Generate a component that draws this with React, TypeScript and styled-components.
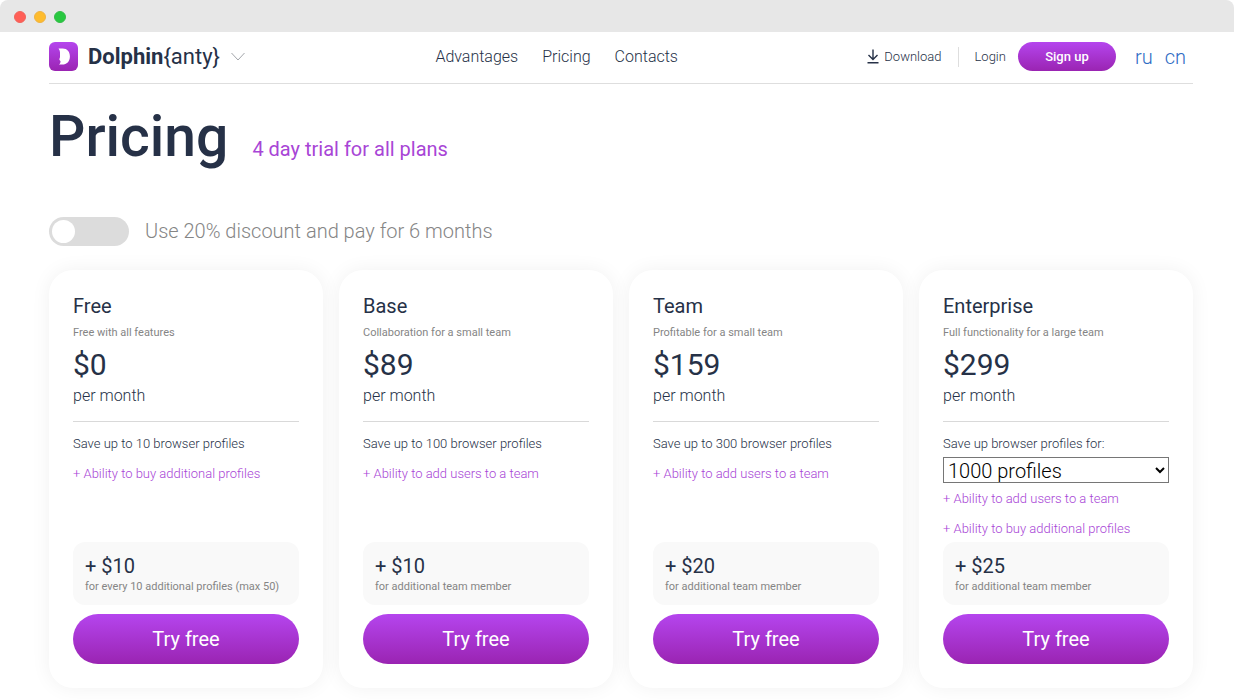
import React, { useState } from "react";
import styled, { createGlobalStyle } from "styled-components";

const ink = "#263147";
const purple = "#a845d6";
const gray = "#858585";
const gradient = "linear-gradient(180deg, #b545ee 0%, #9a24b2 100%)";

const GlobalStyle = createGlobalStyle`
  *, *::before, *::after { box-sizing: border-box; }
  body {
    margin: 0;
    background: #fff;
    color: ${ink};
    font-family: Roboto, "Liberation Sans", sans-serif;
    font-weight: 300;
  }
  h1, h2, p { margin: 0; }
  a { color: inherit; text-decoration: none; }
  button, select { font-family: inherit; }
`;

const BrowserWindow = styled.div`
  min-height: 100vh;
  overflow: hidden;
  border-radius: 8px;
  background: #fff;
`;

const TitleBar = styled.div`
  display: flex;
  align-items: center;
  gap: 8px;
  height: 32px;
  padding: 2px 14px 0;
  background: #e7e7e7;
`;

const Dot = styled.span<{ $color: string; $edge: string }>`
  width: 12px;
  height: 12px;
  border: 1px solid ${(p) => p.$edge};
  border-radius: 50%;
  background: ${(p) => p.$color};
`;

const Page = styled.div`
  padding: 0 41px 12px 49px;
`;

const Header = styled.header`
  display: flex;
  align-items: center;
  justify-content: space-between;
  height: 52px;
  padding-bottom: 2px;
  border-bottom: 1px solid #dedede;
`;

const Brand = styled.button`
  display: flex;
  align-items: center;
  padding: 0;
  border: 0;
  background: none;
  color: ${ink};
  font-size: 22px;
  font-weight: 400;
  line-height: 28px;
  cursor: pointer;

  svg:first-child { margin-right: 10px; }
  svg:last-child { margin-left: 10px; }
  strong { font-weight: 700; }
`;

const Nav = styled.nav`
  display: flex;
  gap: 24px;
  font-size: 16px;
  line-height: 20px;
`;

const Actions = styled.div`
  display: flex;
  align-items: center;
  font-size: 13px;
  line-height: 16px;
`;

const Download = styled.a`
  display: flex;
  align-items: center;
  gap: 5px;
  padding-right: 16px;
`;

const Login = styled.a`
  padding: 2px 12px 2px 16px;
  border-left: 1px solid #dedede;
`;

const PillButton = styled.button<{ $large?: boolean }>`
  width: ${(p) => (p.$large ? "100%" : "98px")};
  height: ${(p) => (p.$large ? "50px" : "29px")};
  padding: 0;
  border: 0;
  border-radius: 25px;
  background: ${gradient};
  color: #fff;
  font-size: ${(p) => (p.$large ? "20px" : "13px")};
  font-weight: ${(p) => (p.$large ? 400 : 500)};
  cursor: pointer;
`;

const Languages = styled.div`
  display: flex;
  gap: 12px;
  padding: 0 7px 0 19px;
  color: #2f6cc4;
  font-size: 20px;
  line-height: 24px;
`;

const Heading = styled.div`
  display: flex;
  align-items: baseline;
  gap: 24px;
  padding-top: 21px;
`;

const Title = styled.h1`
  font-size: 57px;
  font-weight: 500;
  line-height: 64px;
`;

const Trial = styled.p`
  color: ${purple};
  font-size: 20px;
  font-weight: 400;
  line-height: 24px;
`;

const Discount = styled.label`
  display: flex;
  align-items: center;
  gap: 16px;
  width: max-content;
  margin: 47px 0 24px;
  color: ${gray};
  font-size: 20px;
  line-height: 30px;
  cursor: pointer;
`;

const Toggle = styled.input`
  display: flex;
  align-items: center;
  width: 80px;
  height: 29px;
  margin: 0;
  padding: 3px;
  appearance: none;
  border-radius: 15px;
  background: #dcdcdc;
  cursor: pointer;

  &::before {
    content: "";
    width: 23px;
    height: 23px;
    border-radius: 50%;
    background: #fff;
  }
  &:checked { justify-content: flex-end; background: ${purple}; }
`;

const Plans = styled.main`
  display: grid;
  grid-template-columns: repeat(4, minmax(0, 1fr));
  gap: 16px;
`;

const Card = styled.section`
  display: flex;
  flex-direction: column;
  min-height: 418px;
  padding: 24px;
  border-radius: 24px;
  background: #fff;
  box-shadow: 0 0 20px rgba(0, 0, 0, 0.06);
`;

const PlanName = styled.h2`
  font-size: 20px;
  font-weight: 400;
  line-height: 24px;
`;

const Note = styled.p`
  color: ${gray};
  font-size: 11px;
  font-weight: 400;
  line-height: 16px;
`;

const Summary = styled.div`
  padding-bottom: 15px;
  border-bottom: 1px solid #d9d9d9;

  ${Note} { margin-top: 7px; }
`;

const Price = styled.p`
  margin-top: 6px;
  font-size: 30px;
  font-weight: 400;
  line-height: 36px;
`;

const Period = styled.p`
  margin-top: 3px;
  font-size: 16px;
  line-height: 20px;
`;

const Features = styled.div`
  flex: 1;
  padding-top: 14px;
  font-size: 13px;
  line-height: 16px;
`;

const Limit = styled.p`
  display: block;
`;

const ProfileSelect = styled.select`
  display: block;
  width: 100%;
  height: 26px;
  margin: 5px 0 -6px;
  padding: 0;
  border: 1px solid #767676;
  border-radius: 0;
  background: #fff;
  color: #000;
  font-size: 20px;
  font-weight: 300;
`;

const Perk = styled.p`
  margin-top: 14px;
  color: ${purple};
`;

const Extra = styled.div`
  margin-bottom: 9px;
  padding: 11px 12px 10px;
  border-radius: 12px;
  background: #f9f9f9;
`;

const ExtraPrice = styled.p`
  font-size: 20px;
  font-weight: 400;
  line-height: 26px;
`;

const plans = [
  {
    name: "Free", note: "Free with all features", price: "$0",
    limit: "Save up to 10 browser profiles",
    perks: ["+ Ability to buy additional profiles"],
    extra: "+ $10", extraNote: "for every 10 additional profiles (max 50)",
  },
  {
    name: "Base", note: "Collaboration for a small team", price: "$89",
    limit: "Save up to 100 browser profiles",
    perks: ["+ Ability to add users to a team"],
    extra: "+ $10", extraNote: "for additional team member",
  },
  {
    name: "Team", note: "Profitable for a small team", price: "$159",
    limit: "Save up to 300 browser profiles",
    perks: ["+ Ability to add users to a team"],
    extra: "+ $20", extraNote: "for additional team member",
  },
  {
    name: "Enterprise", note: "Full functionality for a large team", price: "$299",
    limit: "Save up browser profiles for:", selectable: true,
    perks: ["+ Ability to add users to a team", "+ Ability to buy additional profiles"],
    extra: "+ $25", extraNote: "for additional team member",
  },
];

function Logo() {
  return (
    <svg width="29" height="29" viewBox="0 0 29 29" aria-hidden="true">
      <defs>
        <linearGradient id="logo" x1="0" y1="0" x2="0" y2="1">
          <stop offset="0" stopColor="#b545ee" />
          <stop offset="1" stopColor="#9a24b2" />
        </linearGradient>
      </defs>
      <rect width="29" height="29" rx="6" fill="url(#logo)" />
      <path d="M9.500 6.600h4.200c4.400 0 7.200 3.200 7.200 7.800 0 4.800-3.100 8.200-7.700 8.200H9.800c1.300-.8 1.700-2 1.700-3.700-.6-.2-1-.9-1.200-2 .5-.6.7-1.400.7-2.500 0-2.900.4-5.800-1.500-7.800Z" fill="#fff" />
    </svg>
  );
}

export default function App() {
  const [discount, setDiscount] = useState(false);
  return (
    <>
      <GlobalStyle />
      <BrowserWindow>
        <TitleBar>
          <Dot $color="#ff5f57" $edge="#f0645c" />
          <Dot $color="#febc2e" $edge="#eeb243" />
          <Dot $color="#28c840" $edge="#35bb49" />
        </TitleBar>
        <Page>
          <Header>
            <Brand type="button">
              <Logo />
              <strong>Dolphin</strong>{"{anty}"}
              <svg width="16" height="10" viewBox="0 0 16 10" fill="none" stroke="#a3a6ab" aria-hidden="true">
                <path d="M1.500 1 8 8l6.500-7" />
              </svg>
            </Brand>
            <Nav>
              <a href="#advantages">Advantages</a>
              <a href="#pricing">Pricing</a>
              <a href="#contacts">Contacts</a>
            </Nav>
            <Actions>
              <Download href="#download">
                <svg width="12" height="15" viewBox="0 0 12 15" fill="none" stroke={ink} strokeWidth="1.400" aria-hidden="true">
                  <path d="M6 .5v10M1.500 6 6 10.500 10.500 6M.5 13.800h11" />
                </svg>
                Download
              </Download>
              <Login href="#login">Login</Login>
              <PillButton type="button">Sign up</PillButton>
              <Languages>
                <a href="#ru">ru</a>
                <a href="#cn">cn</a>
              </Languages>
            </Actions>
          </Header>
          <Heading>
            <Title>Pricing</Title>
            <Trial>4 day trial for all plans</Trial>
          </Heading>
          <Discount>
            <Toggle type="checkbox" checked={discount} onChange={(e) => setDiscount(e.target.checked)} />
            Use 20% discount and pay for 6 months
          </Discount>
          <Plans>
            {plans.map((plan) => (
              <Card key={plan.name}>
                <Summary>
                  <PlanName>{plan.name}</PlanName>
                  <Note>{plan.note}</Note>
                  <Price>{plan.price}</Price>
                  <Period>per month</Period>
                </Summary>
                <Features>
                  {plan.selectable ? (
                    <>
                      <Limit as="label" htmlFor="profiles">{plan.limit}</Limit>
                      <ProfileSelect id="profiles">
                        <option>1000 profiles</option>
                      </ProfileSelect>
                    </>
                  ) : (
                    <Limit>{plan.limit}</Limit>
                  )}
                  {plan.perks.map((perk) => (
                    <Perk key={perk}>{perk}</Perk>
                  ))}
                </Features>
                <Extra>
                  <ExtraPrice>{plan.extra}</ExtraPrice>
                  <Note>{plan.extraNote}</Note>
                </Extra>
                <PillButton type="button" $large>Try free</PillButton>
              </Card>
            ))}
          </Plans>
        </Page>
      </BrowserWindow>
    </>
  );
}
